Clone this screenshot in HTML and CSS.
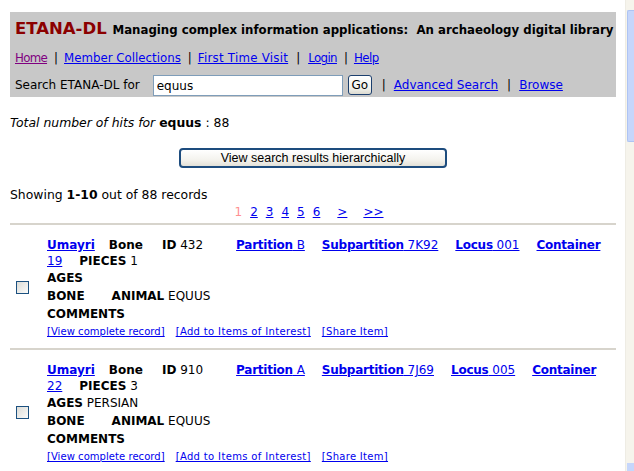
FILE: index.html
```html
<!DOCTYPE html>
<html>
<head>
<meta charset="utf-8">
<title>ETANA-DL Search Results</title>
<link rel="stylesheet" href="styles.css">
</head>
<body>
<div class="page">
  <div class="masthead">
    <div class="brand"><span class="logo">ETANA-DL</span> <span class="tagline">Managing complex information applications:&nbsp; An archaeology digital library</span></div>
    <div class="nav">
      <a class="visited home" href="#">Home</a><span class="sep">|</span><a href="#">Member Collections</a><span class="sep">|</span><a class="first-visit" href="#">First Time Visit</a><span class="sep wide">|</span><a class="login" href="#">Login</a><span class="sep">|</span><a class="help" href="#">Help</a>
    </div>
    <form class="search">
      <label class="search-label">Search ETANA-DL for</label>
      <input class="search-input" type="text" value="equus">
      <button class="go" type="button">Go</button>
      <span class="sep wide first">|</span><a href="#">Advanced Search</a><span class="sep wide">|</span><a href="#">Browse</a>
    </form>
  </div>

  <p class="hits"><i>Total number of hits for</i> <b>equus</b> : 88</p>

  <div class="tree-btn-wrap"><button class="tree-btn" type="button">View search results hierarchically</button></div>

  <p class="showing">Showing <b>1-10</b> out of 88 records</p>
  <div class="pager">
    <span class="current">1</span><a href="#">2</a><a href="#">3</a><a href="#">4</a><a href="#">5</a><a href="#">6</a><a class="next" href="#">&gt;</a><a class="last" href="#">&gt;&gt;</a>
  </div>

  <div class="record">
    <div class="pick"><span class="box"></span></div>
    <div class="fields">
      <div class="head">
        <a class="f site" href="#"><b>Umayri</b></a><span class="f kind"><b>Bone</b></span><span class="f id"><b>ID</b> 432</span><a class="f" href="#"><b>Partition</b> B</a><a class="f" href="#"><b>Subpartition</b> 7K92</a><a class="f" href="#"><b>Locus</b> 001</a><a class="f" href="#"><b>Container</b> 19</a><span class="f"><b>PIECES</b> 1</span>
      </div>
      <div class="row"><b>AGES</b></div>
      <div class="row"><b class="lbl">BONE</b><b>ANIMAL</b> EQUUS</div>
      <div class="row"><b>COMMENTS</b></div>
      <div class="actions"><a class="view" href="#">[View complete record]</a><a class="add" href="#">[Add to Items of Interest]</a><a href="#">[Share Item]</a></div>
    </div>
  </div>

  <div class="record">
    <div class="pick"><span class="box"></span></div>
    <div class="fields">
      <div class="head">
        <a class="f site" href="#"><b>Umayri</b></a><span class="f kind"><b>Bone</b></span><span class="f id"><b>ID</b> 910</span><a class="f" href="#"><b>Partition</b> A</a><a class="f" href="#"><b>Subpartition</b> 7J69</a><a class="f" href="#"><b>Locus</b> 005</a><a class="f" href="#"><b>Container</b> 22</a><span class="f"><b>PIECES</b> 3</span>
      </div>
      <div class="row"><b>AGES</b> PERSIAN</div>
      <div class="row"><b class="lbl">BONE</b><b>ANIMAL</b> EQUUS</div>
      <div class="row"><b>COMMENTS</b></div>
      <div class="actions"><a class="view" href="#">[View complete record]</a><a class="add" href="#">[Add to Items of Interest]</a><a href="#">[Share Item]</a></div>
    </div>
  </div>
</div>

<div class="scrollbar"><div class="thumb"></div><div class="grip"></div></div>
</body>
</html>
```

FILE: styles.css
```css
html, body {
  margin: 0;
  padding: 0;
  background: #fff;
}

body {
  font-family: "DejaVu Sans", Verdana, sans-serif;
  font-size: 12px;
  color: #000;
  overflow: hidden;
}

a {
  color: #0000ee;
  text-decoration: underline;
}

.page {
  width: 606px;
  margin: 12px 0 0 10px;
}

/* grey banner */
.masthead {
  background: #c8c8c8;
  padding: 7px 0 2px 5px;
  height: 76px;
}

.brand {
  height: 22px;
  line-height: 20px;
  white-space: nowrap;
}

.logo {
  color: #8b0000;
  font-weight: bold;
  font-size: 16.5px;
}

.tagline {
  font-weight: bold;
  font-size: 11.75px;
  margin-left: 2px;
}

.nav {
  margin-top: 8px;
  line-height: 18px;
  font-size: 11.8px;
}

.nav a.visited {
  color: #800080;
}

.nav .home {
  letter-spacing: -0.7px;
}

.nav .first-visit {
  letter-spacing: 0.25px;
}

.nav .login {
  letter-spacing: -0.6px;
}

.nav .help {
  letter-spacing: -0.5px;
}

.sep {
  color: #000;
}

.nav .sep {
  margin: 0 6px 0 7px;
}

.nav .sep.wide {
  margin: 0 8px 0 8px;
}

.search {
  display: flex;
  align-items: center;
  margin: 7px 0 0 0;
  height: 22px;
}

.search-label {
  margin-right: 13px;
}

.search-input {
  box-sizing: border-box;
  width: 190px;
  height: 21px;
  border: 1px solid #7f9db9;
  padding: 1px 3px 0;
  font-family: "DejaVu Sans", Verdana, sans-serif;
  font-size: 12px;
  margin: 1px 5px 0 0;
}

.go {
  box-sizing: border-box;
  width: 24px;
  height: 20px;
  padding: 0;
  border: 1px solid #1c3f6e;
  border-radius: 3px;
  background: linear-gradient(#ffffff, #f0f0ea 70%, #dcdad0);
  font-family: "DejaVu Sans", Verdana, sans-serif;
  font-size: 12px;
  color: #000;
  margin: -1px 2px 0 0;
}

.search .sep.wide {
  margin: 0 8px 0 9px;
}

.search .sep.first {
  margin-left: 8px;
}

.hits {
  margin: 17px 0 0 0;
  line-height: 18px;
  font-size: 12.4px;
}

.tree-btn-wrap {
  display: flex;
  justify-content: center;
  margin-top: 16px;
}

.tree-btn {
  box-sizing: border-box;
  width: 268px;
  height: 20px;
  border: 2px solid #1d4c7e;
  border-radius: 4px;
  background: linear-gradient(#ffffff, #f4f3ee 60%, #e3e1d8);
  font-family: "Liberation Sans", Arial, sans-serif;
  font-size: 12.5px;
  color: #000;
  padding: 0;
}

.showing {
  margin: 18px 0 0 0;
  line-height: 18px;
  font-size: 12.4px;
}

.pager {
  display: flex;
  justify-content: center;
  line-height: 16px;
  padding-right: 8px;
}

.pager > * {
  margin: 0 4px;
}

.pager .current {
  color: #ff9090;
}

.pager a.next {
  margin-left: 13px;
  margin-right: 8px;
}

.pager a.last {
  margin-left: 8px;
}

/* result rows */
.record {
  display: flex;
  border-top: 2px solid #d7d4cc;
  padding: 12px 0 7px;
  margin-top: 3px;
}

.record + .record {
  margin-top: 0;
}

.pick {
  width: 37px;
  display: flex;
  align-items: center;
}

.box {
  box-sizing: border-box;
  width: 13px;
  height: 13px;
  margin: 0 0 4px 6px;
  border: 1px solid #1c5180;
  background: linear-gradient(135deg, #dcdcd7, #fbfbfa);
}

.fields {
  flex: 1;
  min-width: 0;
}

.head {
  line-height: 16px;
}

.head .f {
  margin-right: 17px;
}

.head .site {
  margin-right: 14px;
}

.head .kind {
  margin-right: 19px;
}

.head .id {
  margin-right: 33px;
}

.head a.f:not(.site) b {
  letter-spacing: -0.25px;
}

.row {
  line-height: 18px;
}

.row .lbl {
  margin-right: 27px;
}

.actions {
  font-size: 10px;
  line-height: 18px;
  letter-spacing: 0.3px;
}

.actions a {
  margin-right: 11px;
}

.actions .view {
  letter-spacing: 0.05px;
}

.actions .add {
  letter-spacing: 0.35px;
}

/* window scrollbar at the right edge */
.scrollbar {
  position: fixed;
  top: 0;
  right: 0;
  width: 8px;
  height: 100%;
  background: #f6f4ec;
  border-left: 1px solid #eeece4;
}

.thumb {
  position: absolute;
  top: 10px;
  left: 1px;
  right: 0;
  height: 130px;
  background: #c6d6fb;
  border: 1px solid #aec4f3;
  border-right: 0;
  border-radius: 2px 0 0 2px;
}

.grip {
  position: absolute;
  bottom: 0;
  left: 1px;
  right: 0;
  height: 8px;
  background: #c6d6fb;
}
```
